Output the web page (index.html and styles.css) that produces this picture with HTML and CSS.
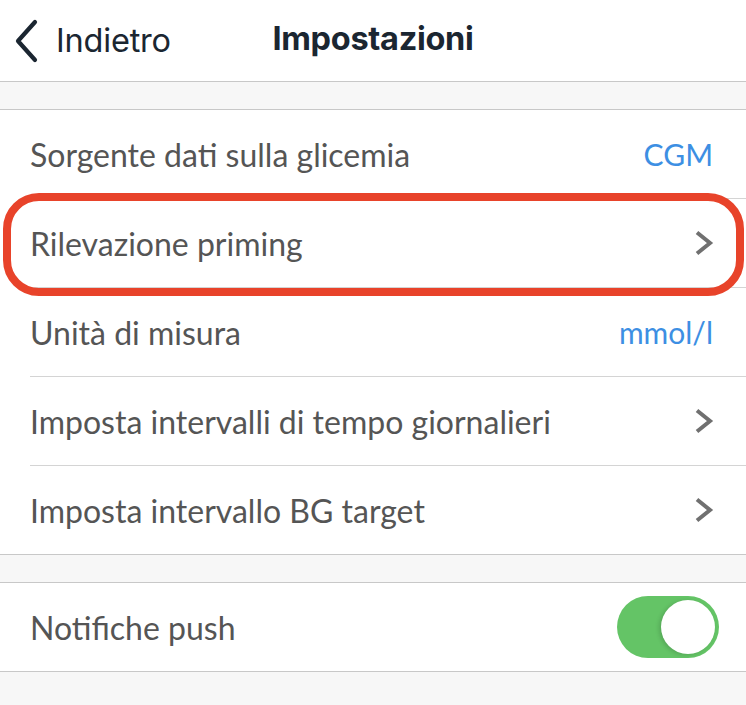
FILE: index.html
```html
<!DOCTYPE html>
<html lang="it">
<head>
<meta charset="utf-8">
<title>Impostazioni</title>
<link rel="stylesheet" href="styles.css">
</head>
<body>
<header class="nav">
  <div class="nav-back">
    <svg class="back-icon" width="24" height="44" viewBox="0 0 24 44"><path d="M21 3 L4 22 L21 41" fill="none" stroke="#1b2631" stroke-width="4.2" stroke-linecap="round" stroke-linejoin="round"/></svg>
    <span>Indietro</span>
  </div>
  <h1 class="nav-title">Impostazioni</h1>
</header>
<div class="spacer"></div>
<section class="group">
  <div class="row"><span class="label">Sorgente dati sulla glicemia</span><span class="value">CGM</span></div>
  <div class="row highlighted"><span class="label">Rilevazione priming</span>
    <svg class="chev" width="20" height="26" viewBox="0 0 20 26"><path d="M3 2.5 L16 13 L3 23.5" fill="none" stroke="#707070" stroke-width="4" stroke-linejoin="miter"/></svg>
    <div class="mark"></div>
  </div>
  <div class="row"><span class="label">Unità di misura</span><span class="value">mmol/l</span></div>
  <div class="row"><span class="label">Imposta intervalli di tempo giornalieri</span>
    <svg class="chev" width="20" height="26" viewBox="0 0 20 26"><path d="M3 2.5 L16 13 L3 23.5" fill="none" stroke="#707070" stroke-width="4" stroke-linejoin="miter"/></svg>
  </div>
  <div class="row"><span class="label">Imposta intervallo BG target</span>
    <svg class="chev" width="20" height="26" viewBox="0 0 20 26"><path d="M3 2.5 L16 13 L3 23.5" fill="none" stroke="#707070" stroke-width="4" stroke-linejoin="miter"/></svg>
  </div>
</section>
<div class="spacer"></div>
<section class="group">
  <div class="row"><span class="label">Notifiche push</span>
    <div class="toggle"><div class="knob"></div></div>
  </div>
</section>
</body>
</html>
```
FILE: styles.css
```css
html, body {
  margin: 0;
  padding: 0;
  background: #f7f7f7;
  width: 746px;
  height: 705px;
  overflow: hidden;
}
body {
  font-family: "Lato", "Liberation Sans", sans-serif;
}
.nav {
  height: 81px;
  background: #fff;
  border-bottom: 1px solid #c8c8c8;
  display: flex;
  align-items: center;
  position: relative;
}
.nav-back {
  display: flex;
  align-items: center;
  padding-left: 14px;
  gap: 18px;
  font-family: "Inter", "Liberation Sans", sans-serif;
  font-size: 32.5px;
  color: #1b2631;
  letter-spacing: -0.2px;
}
.back-icon { display: block; }
.nav-title {
  margin: 0;
  position: absolute;
  left: 0;
  right: 0;
  top: 0;
  height: 81px;
  line-height: 78px;
  text-align: center;
  font-family: "Inter", "Liberation Sans", sans-serif;
  font-weight: 700;
  font-size: 32.5px;
  color: #1b2631;
  letter-spacing: -0.3px;
  pointer-events: none;
}
.spacer {
  height: 27px;
}
.group {
  background: #fff;
  border-top: 1px solid #c8c8c8;
  border-bottom: 1px solid #c8c8c8;
  padding-left: 30px;
}
.row {
  height: 88px;
  display: flex;
  align-items: center;
  justify-content: space-between;
  padding-right: 32px;
  border-bottom: 1px solid #d4d4d4;
  position: relative;
}
.row:last-child {
  border-bottom: none;
}
.label {
  font-size: 32px;
  color: #555555;
}
.value {
  font-size: 30px;
  color: #3d8fe3;
  margin-right: 1px;
}
.chev {
  display: block;
  margin-right: 0;
}
.mark {
  position: absolute;
  left: -27px;
  right: 2px;
  top: -6px;
  bottom: -9px;
  border: 8px solid #e8432a;
  border-radius: 36px;
  pointer-events: none;
}
.toggle {
  width: 102px;
  height: 62px;
  border-radius: 31px;
  background: #64c466;
  position: relative;
  margin-right: -5px;
}
.knob {
  position: absolute;
  right: 4px;
  top: 4px;
  width: 54px;
  height: 54px;
  border-radius: 50%;
  background: #fff;
  box-shadow: -2px 1px 4px rgba(0,0,0,0.15);
}
```
